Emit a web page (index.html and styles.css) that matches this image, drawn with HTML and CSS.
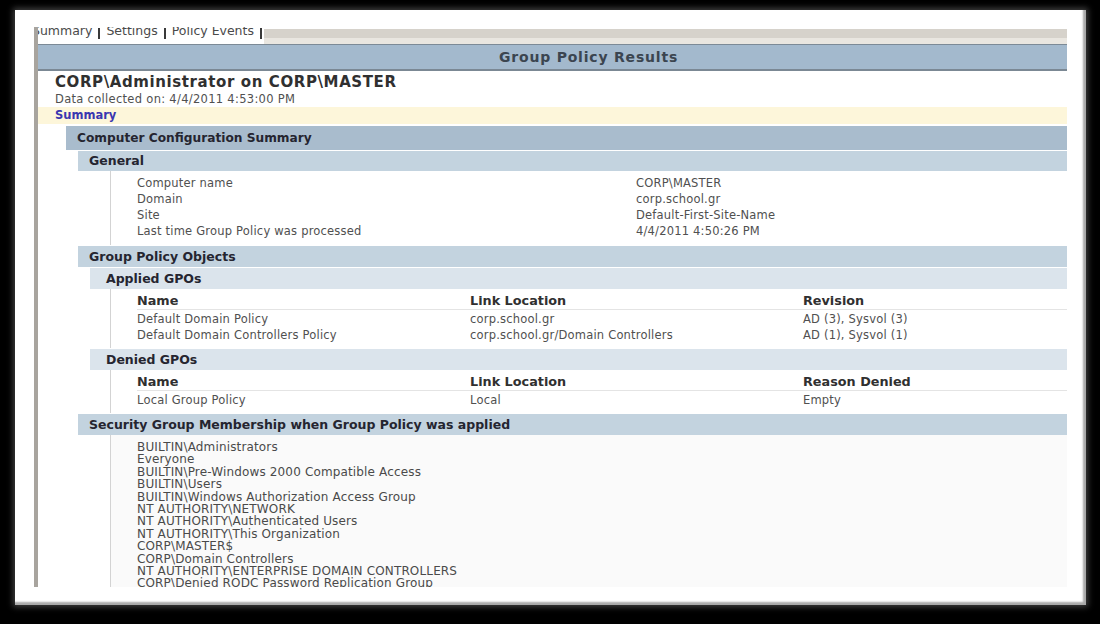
FILE: index.html
```html
<!DOCTYPE html>
<html>
<head>
<meta charset="utf-8">
<link rel="stylesheet" href="styles.css">
</head>
<body>
<div class="frame">
  <div class="screen">
    <div class="tabs">
      <span class="tab first">Summary</span>
      <span class="sep"></span>
      <span class="tab">Settings</span>
      <span class="sep"></span>
      <span class="tab">Policy Events</span>
      <span class="sep"></span>
      <span class="tabfill"></span>
    </div>
    <div class="report-head">Group Policy Results</div>
    <div class="title">CORP\Administrator on CORP\MASTER</div>
    <div class="collected">Data collected on: 4/4/2011 4:53:00 PM</div>
    <div class="summary-bar">Summary</div>

    <div class="h1">Computer Configuration Summary</div>
    <div class="h2 first">General</div>
    <div class="body kv">
      <div class="row"><span class="k">Computer name</span><span>CORP\MASTER</span></div>
      <div class="row"><span class="k">Domain</span><span>corp.school.gr</span></div>
      <div class="row"><span class="k">Site</span><span>Default-First-Site-Name</span></div>
      <div class="row"><span class="k">Last time Group Policy was processed</span><span>4/4/2011 4:50:26 PM</span></div>
    </div>

    <div class="h2">Group Policy Objects</div>
    <div class="h3">Applied GPOs</div>
    <div class="body tbl">
      <div class="row th"><span>Name</span><span>Link Location</span><span>Revision</span></div>
      <div class="row"><span>Default Domain Policy</span><span>corp.school.gr</span><span>AD (3), Sysvol (3)</span></div>
      <div class="row"><span>Default Domain Controllers Policy</span><span>corp.school.gr/Domain Controllers</span><span>AD (1), Sysvol (1)</span></div>
    </div>
    <div class="h3">Denied GPOs</div>
    <div class="body tbl">
      <div class="row th"><span>Name</span><span>Link Location</span><span>Reason Denied</span></div>
      <div class="row"><span>Local Group Policy</span><span>Local</span><span>Empty</span></div>
    </div>

    <div class="h2">Security Group Membership when Group Policy was applied</div>
    <div class="body list">
      <div>BUILTIN\Administrators</div>
      <div>Everyone</div>
      <div>BUILTIN\Pre-Windows 2000 Compatible Access</div>
      <div>BUILTIN\Users</div>
      <div>BUILTIN\Windows Authorization Access Group</div>
      <div>NT AUTHORITY\NETWORK</div>
      <div>NT AUTHORITY\Authenticated Users</div>
      <div>NT AUTHORITY\This Organization</div>
      <div>CORP\MASTER$</div>
      <div>CORP\Domain Controllers</div>
      <div>NT AUTHORITY\ENTERPRISE DOMAIN CONTROLLERS</div>
      <div>CORP\Denied RODC Password Replication Group</div>
    </div>
  </div>
</div>
</body>
</html>
```
FILE: styles.css
```css
html, body {
  margin: 0;
  padding: 0;
  background: #000;
  width: 1100px;
  height: 624px;
  overflow: hidden;
}

.frame {
  box-sizing: border-box;
  width: 1071px;
  height: 595px;
  margin: 10px 0 0 15px;
  padding: 17px 19px 18px 19px;
  background: #fff;
  box-shadow: inset -3px -3px 2px #a9a9a9, 0 0 6px 2px rgba(255,255,255,0.25);
  font-family: "DejaVu Sans", Verdana, sans-serif;
}

.screen {
  box-sizing: border-box;
  height: 560px;
  overflow: hidden;
  border-left: 4px solid #a8a49e;
  background: #fff;
}

/* tab strip */
.tabs {
  display: flex;
  align-items: flex-start;
  height: 17px;
  overflow: hidden;
}
.tab {
  font-size: 12.5px;
  color: #4a4a4a;
  line-height: 14px;
  margin-top: -3px;
  padding: 0 6px;
}
.tab.first {
  padding-left: 0;
  margin-left: -6px;
}
.sep {
  width: 2px;
  height: 11px;
  margin-top: 1px;
  background: #3a3a3a;
}
.tabfill {
  flex: 1;
  height: 15px;
  margin-top: 2px;
  margin-left: 2px;
  background: linear-gradient(#d6d2cb 0 9px, #e9e6e0 9px);
}

.report-head {
  height: 24px;
  line-height: 24px;
  border-top: 1px solid #7c8a96;
  border-bottom: 2px solid #7b8894;
  background: #a3b9cd;
  text-align: center;
  padding-left: 72px;
  font-weight: bold;
  font-size: 14px;
  letter-spacing: 0.8px;
  color: #3b4550;
}

.title {
  padding: 2px 0 0 17px;
  height: 18px;
  line-height: 19px;
  font-weight: bold;
  font-size: 15px;
  letter-spacing: 0.6px;
  color: #303030;
}
.collected {
  padding-left: 17px;
  height: 15px;
  line-height: 16px;
  font-size: 11.5px;
  letter-spacing: 0.3px;
  color: #505050;
}
.summary-bar {
  margin-top: 1px;
  height: 17px;
  line-height: 17px;
  background: #fdf6da;
  padding-left: 17px;
  font-weight: bold;
  font-size: 11.5px;
  color: #3a36b0;
}

.h1 {
  margin: 2px 0 0 28px;
  height: 24px;
  line-height: 24px;
  padding-left: 11px;
  background: #a9bccd;
  font-weight: bold;
  font-size: 12.2px;
  color: #252530;
}
.h2 {
  margin: 1px 0 0 40px;
  height: 21px;
  line-height: 21px;
  padding-left: 11px;
  background: #c3d3df;
  font-weight: bold;
  font-size: 12.5px;
  color: #252530;
}
.h2.first {
  height: 20px;
  line-height: 20px;
}
.h3 {
  margin: 1px 0 0 52px;
  height: 21px;
  line-height: 21px;
  padding-left: 16px;
  background: #dbe4ec;
  font-weight: bold;
  font-size: 12.5px;
  color: #252530;
}

.body {
  margin-left: 72px;
  border-left: 1px solid #d3d3d3;
  padding-left: 26px;
  font-size: 11.5px;
  letter-spacing: 0.2px;
  color: #505050;
}

.kv {
  padding-top: 4px;
  padding-bottom: 6px;
}
.kv .row {
  display: grid;
  grid-template-columns: 499px 1fr;
  height: 16px;
  line-height: 16px;
}

.tbl {
  padding-bottom: 5px;
}
.tbl .row {
  display: grid;
  grid-template-columns: 333px 333px 1fr;
  height: 16px;
  line-height: 17px;
}
.tbl .row.th {
  height: 20px;
  line-height: 24px;
  border-bottom: 1px solid #e4e4e4;
  margin-bottom: 1px;
  font-weight: bold;
  font-size: 12.8px;
  letter-spacing: 0;
  color: #303030;
}

.list {
  padding-top: 6px;
  font-size: 12px;
  letter-spacing: 0.15px;
  line-height: 12.4px;
  color: #4a4a4a;
  background: #fafafa;
  height: 200px;
}
.list div {
  height: 12.4px;
  white-space: nowrap;
}
```
